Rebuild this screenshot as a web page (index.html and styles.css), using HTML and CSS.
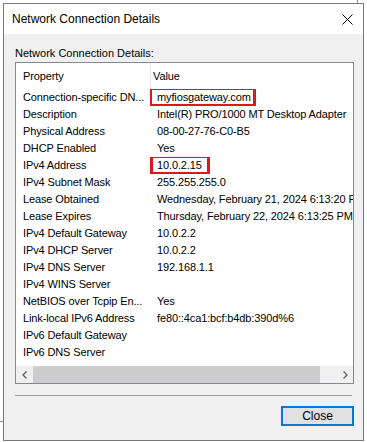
FILE: index.html
```html
<!DOCTYPE html>
<html>
<head>
<meta charset="utf-8">
<link rel="stylesheet" href="styles.css">
</head>
<body>
<div class="window">
  <div class="titlebar">
    <span class="title">Network Connection Details</span>
    <svg class="x" width="11" height="11" viewBox="0 0 11 11"><path d="M0.5 0.5 L10.5 10.5 M10.5 0.5 L0.5 10.5" stroke="#000" stroke-width="1" fill="none"/></svg>
  </div>
  <div class="content">
    <div class="label">Network Connection Details:</div>
    <div class="list">
      <div class="rows">
        <div class="row head"><div class="c1">Property</div><div class="c2">Value</div></div>
        <div class="row"><div class="c1">Connection-specific DN...</div><div class="c2"><span class="mark m1">myfiosgateway.com</span></div></div>
        <div class="row"><div class="c1">Description</div><div class="c2">Intel(R) PRO/1000 MT Desktop Adapter</div></div>
        <div class="row"><div class="c1">Physical Address</div><div class="c2">08-00-27-76-C0-B5</div></div>
        <div class="row"><div class="c1">DHCP Enabled</div><div class="c2">Yes</div></div>
        <div class="row"><div class="c1">IPv4 Address</div><div class="c2"><span class="mark m2">10.0.2.15</span></div></div>
        <div class="row"><div class="c1">IPv4 Subnet Mask</div><div class="c2">255.255.255.0</div></div>
        <div class="row"><div class="c1">Lease Obtained</div><div class="c2">Wednesday, February 21, 2024 6:13:20 PM</div></div>
        <div class="row"><div class="c1">Lease Expires</div><div class="c2">Thursday, February 22, 2024 6:13:25 PM</div></div>
        <div class="row"><div class="c1">IPv4 Default Gateway</div><div class="c2">10.0.2.2</div></div>
        <div class="row"><div class="c1">IPv4 DHCP Server</div><div class="c2">10.0.2.2</div></div>
        <div class="row"><div class="c1">IPv4 DNS Server</div><div class="c2">192.168.1.1</div></div>
        <div class="row"><div class="c1">IPv4 WINS Server</div><div class="c2"></div></div>
        <div class="row"><div class="c1">NetBIOS over Tcpip En...</div><div class="c2">Yes</div></div>
        <div class="row"><div class="c1">Link-local IPv6 Address</div><div class="c2">fe80::4ca1:bcf:b4db:390d%6</div></div>
        <div class="row"><div class="c1">IPv6 Default Gateway</div><div class="c2"></div></div>
        <div class="row"><div class="c1">IPv6 DNS Server</div><div class="c2"></div></div>
      </div>
      <div class="hscroll">
        <div class="arrow"><svg width="8" height="8" viewBox="0 0 8 8"><path d="M5.5 0.5 L2 4 L5.5 7.5" stroke="#606060" stroke-width="1.3" fill="none"/></svg></div>
        <div class="track"><div class="thumb"></div></div>
        <div class="arrow"><svg width="8" height="8" viewBox="0 0 8 8"><path d="M2.5 0.5 L6 4 L2.5 7.5" stroke="#606060" stroke-width="1.3" fill="none"/></svg></div>
      </div>
    </div>
    <div class="sep"></div>
    <div class="buttons"><div class="btn">Close</div></div>
  </div>
</div>
</body>
</html>
```
FILE: styles.css
```css
html, body { margin: 0; padding: 0; }
body {
  width: 367px;
  height: 442px;
  overflow: hidden;
  font-family: "Liberation Sans", Arial, sans-serif;
  font-size: 11px;
  color: #000;
  background:
    linear-gradient(#8a8a8a, #8a8a8a) 357px 0 / 1px 3px no-repeat,
    linear-gradient(#8a8a8a, #8a8a8a) 0 421px / 3px 1px no-repeat,
    #ffffff;
}
.window {
  margin: 3px 0 0 3px;
  width: 359px;
  height: 436px;
  border: 1px solid #7a7a7a;
  background: #f0f0f0;
  display: flex;
  flex-direction: column;
}
.titlebar {
  height: 30px;
  background: #fff;
  display: flex;
  align-items: center;
  justify-content: space-between;
  padding: 0 10px 0 8px;
}
.title { font-size: 12px; }
.x { display: block; }
.content {
  padding: 0 9px 0 11px;
  display: flex;
  flex-direction: column;
}
.label {
  height: 28px;
  line-height: 16px;
  padding-top: 11px;
  box-sizing: border-box;
}
.list {
  height: 322px;
  box-sizing: border-box;
  border: 1px solid #828790;
  background: #fff;
  display: flex;
  flex-direction: column;
}
.rows {
  flex: 1;
  overflow: hidden;
  letter-spacing: -0.12px;
}
.row {
  display: flex;
  height: 17px;
  line-height: 17px;
  white-space: nowrap;
}
.row.head { height: 26px; line-height: 26px; }
.c1 {
  width: 134px;
  flex: none;
  padding-left: 7px;
  box-sizing: border-box;
  overflow: hidden;
}
.c2 {
  flex: 1;
  padding-left: 7px;
  overflow: hidden;
}
.head .c2 {
  border-left: 1px solid #e5e5e5;
  padding-left: 2px;
}
.mark { position: relative; }
.mark::after {
  content: "";
  position: absolute;
  box-sizing: border-box;
  border: 3px solid #e2151f;
  top: -4px;
  height: 20px;
}
.m1::after { left: -8px; right: -5px; }
.m2::after { left: -7px; width: 60px; }
.hscroll {
  height: 17px;
  display: flex;
  background: #f0f0f0;
}
.arrow {
  width: 17px;
  display: flex;
  align-items: center;
  justify-content: center;
}
.track { flex: 1; display: flex; align-items: stretch; }
.thumb { width: 287px; background: #cdcdcd; margin: 0; }
.sep {
  margin-top: 11px;
  height: 1px;
  background: #a0a0a0;
  margin-right: 2px;
}
.buttons {
  display: flex;
  justify-content: flex-end;
  margin-top: 10px;
}
.btn {
  width: 73px;
  height: 20px;
  box-sizing: border-box;
  border: 2px solid #0078d7;
  background: #e1e1e1;
  text-align: center;
  line-height: 16px;
  font-size: 12px;
}
```
